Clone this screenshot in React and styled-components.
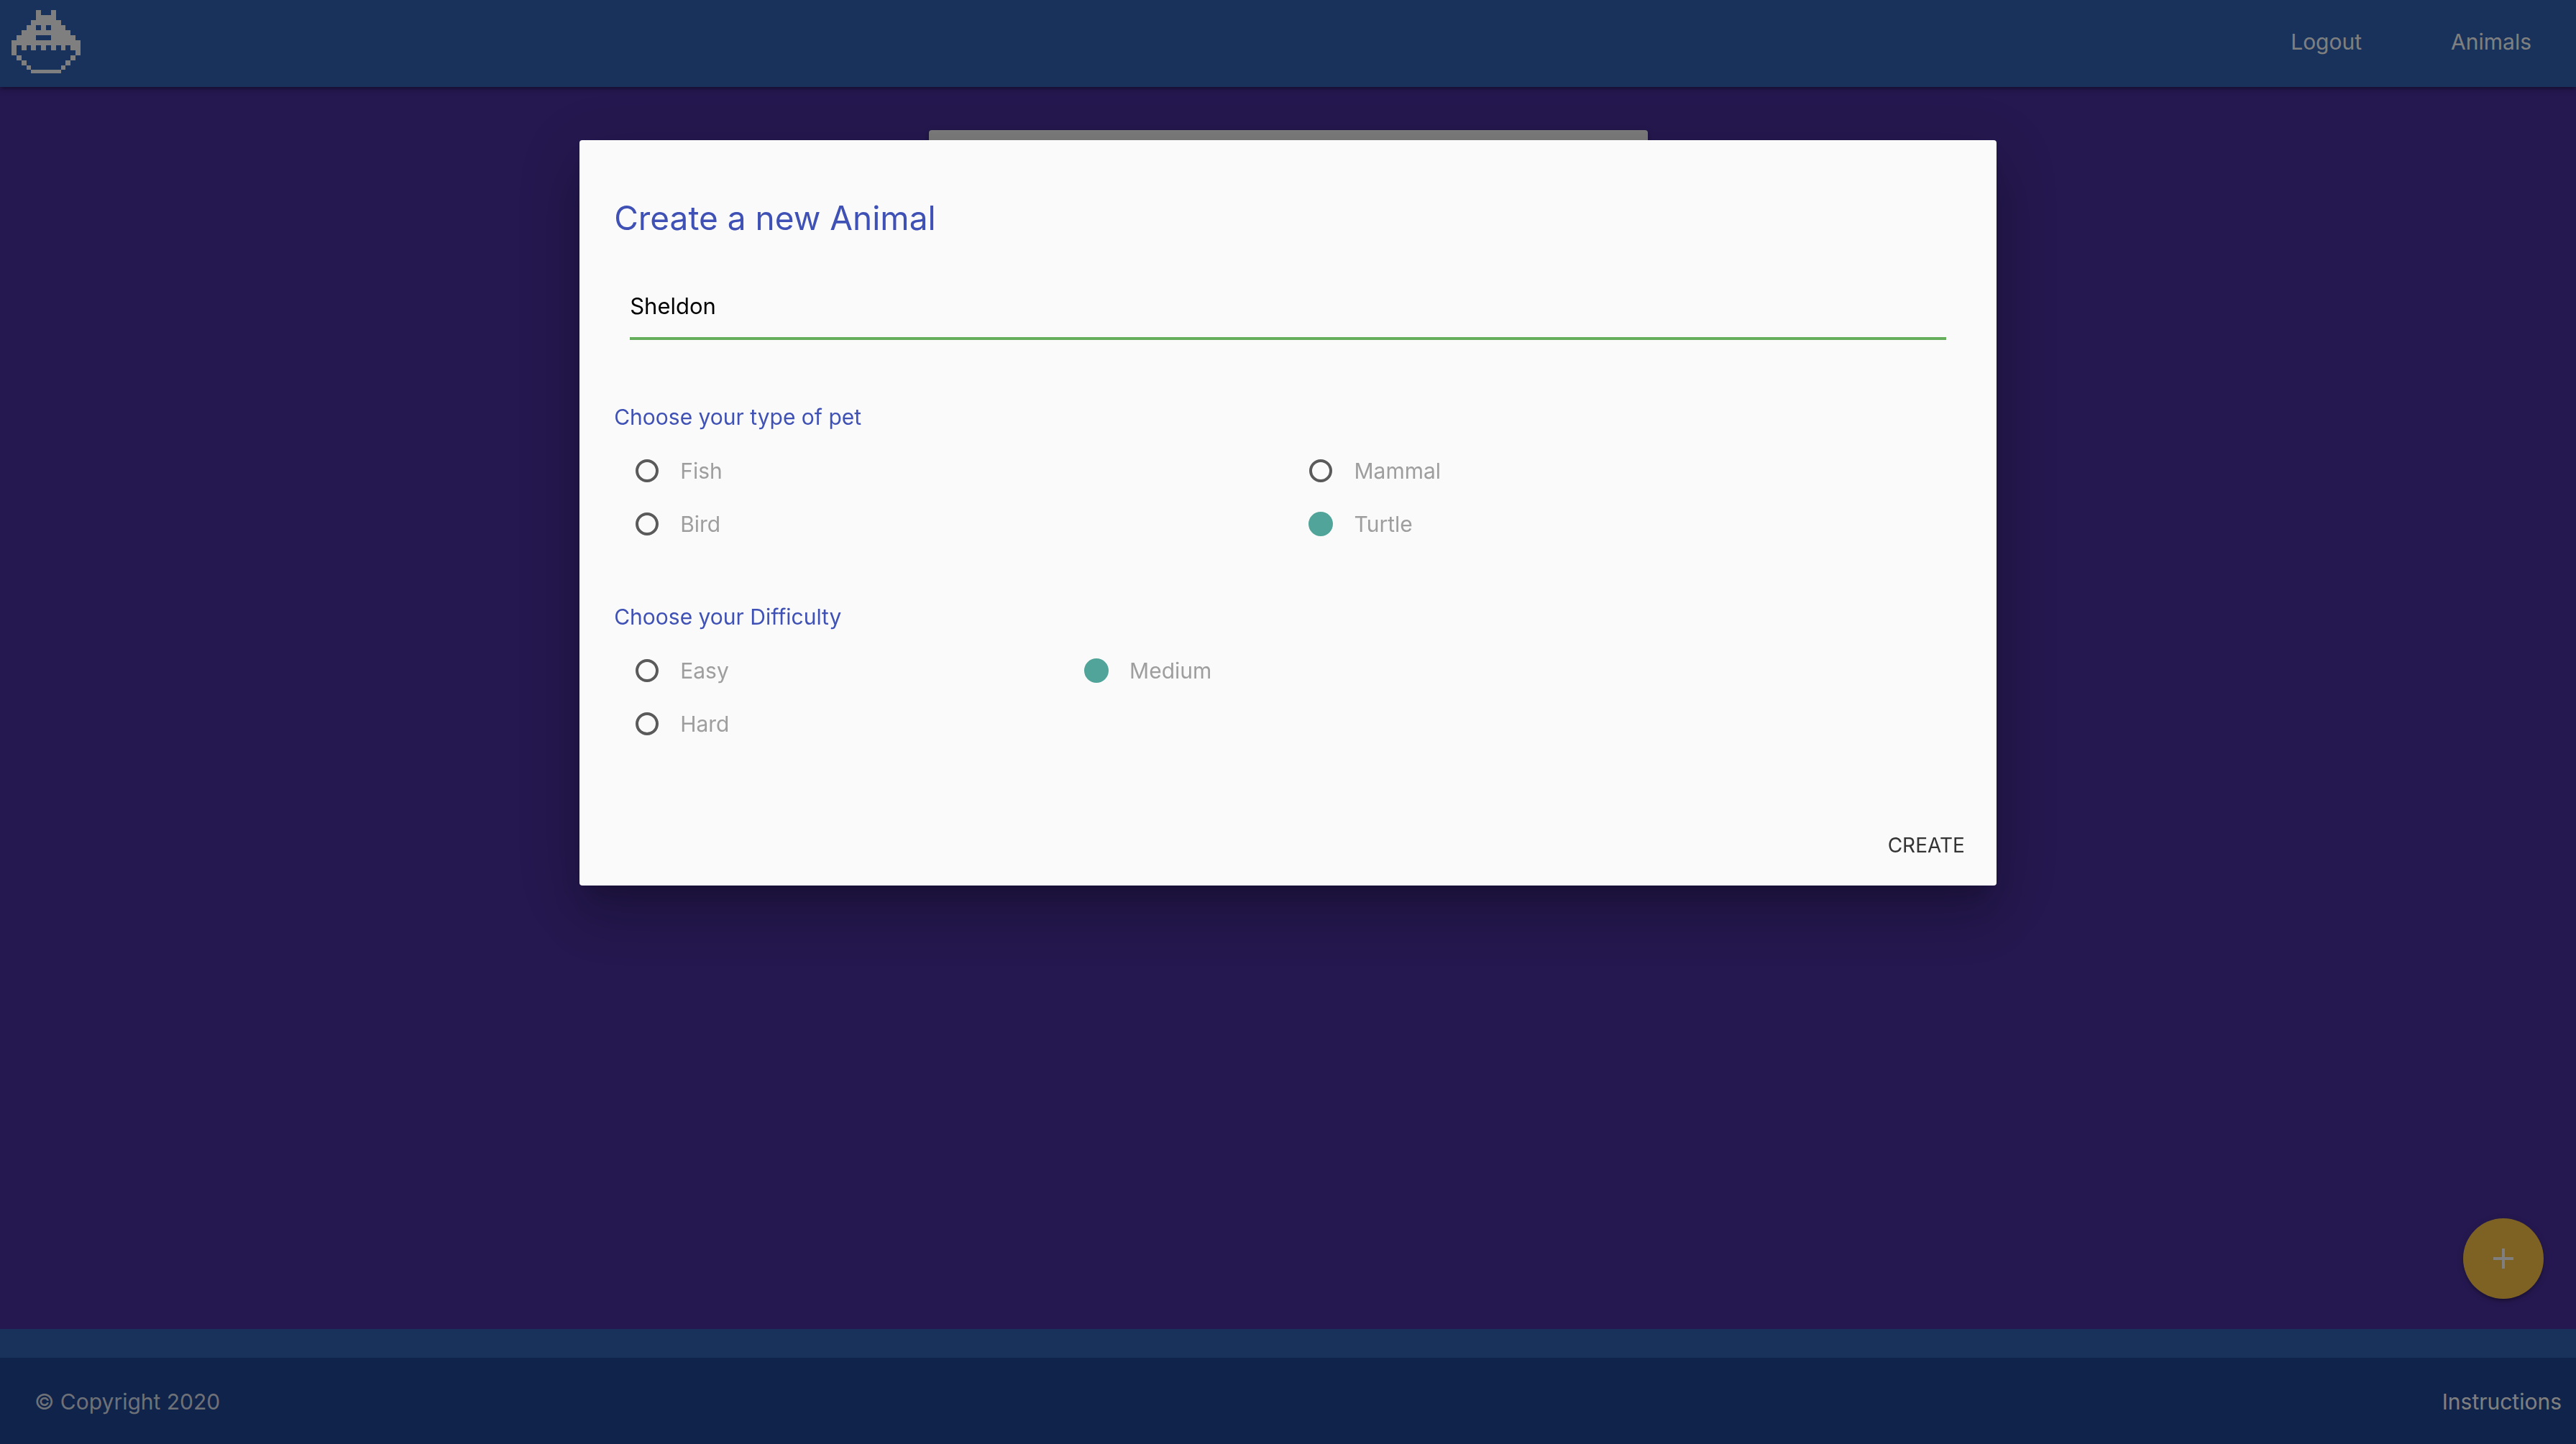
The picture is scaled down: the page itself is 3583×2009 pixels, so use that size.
import React, { useState } from "react";
import styled, { createGlobalStyle } from "styled-components";

const GlobalStyle = createGlobalStyle`
  *, *::before, *::after { box-sizing: border-box; }
  body {
    margin: 0;
    background: #4a30a0;
    font-family: Inter, Roboto, "Liberation Sans", sans-serif;
    font-size: 30px;
    line-height: 44px;
  }
`;

const depth1 =
  "0 4px 4px 0 rgba(0,0,0,.14), 0 6px 2px -4px rgba(0,0,0,.12), 0 2px 10px 0 rgba(0,0,0,.2)";
const depth5 =
  "0 48px 76px 6px rgba(0,0,0,.14), 0 18px 92px 16px rgba(0,0,0,.12), 0 22px 30px -14px rgba(0,0,0,.2)";

const Page = styled.div`
  display: flex;
  flex-direction: column;
  min-height: 100vh;
`;

const Header = styled.header`
  display: flex;
  align-items: center;
  justify-content: space-between;
  min-height: 121px;
  padding: 0 62px 6px 16px;
  background: #3064b8;
  box-shadow: ${depth1};
`;

const HomeLink = styled.a`
  display: block;
  line-height: 0;
`;

const Nav = styled.nav`
  display: flex;
  gap: 124px;
`;

const TextLink = styled.a`
  color: #fff;
  text-decoration: none;
`;

const Main = styled.main`
  flex: 1;
  padding-top: 60px;
`;

const Card = styled.section`
  width: 1000px;
  max-width: 90%;
  height: 640px;
  margin: 0 auto;
  border-radius: 4px;
  background: #fafafa;
  box-shadow: ${depth1};
`;

const Footer = styled.footer`
  padding-top: 40px;
  background: #3064b8;
`;

const FooterBar = styled.div`
  display: flex;
  align-items: center;
  justify-content: space-between;
  min-height: 120px;
  padding: 2px 20px 0 48px;
  background: #1f4696;
`;

const Copyright = styled.span`
  color: rgba(255, 255, 255, 0.85);
`;

const AddButton = styled.button`
  position: fixed;
  right: 45px;
  bottom: 202px;
  display: flex;
  align-items: center;
  justify-content: center;
  width: 112px;
  height: 112px;
  padding: 0;
  border: 0;
  border-radius: 50%;
  background: #fac448;
  box-shadow: ${depth1};
`;

const Overlay = styled.div`
  position: fixed;
  inset: 0;
  display: flex;
  align-items: flex-start;
  justify-content: center;
  padding-top: 195px;
  background: rgba(0, 0, 0, 0.5);
`;

const Modal = styled.form`
  width: 55%;
  border-radius: 4px;
  background: #fafafa;
  box-shadow: ${depth5};
`;

const ModalContent = styled.div`
  padding: 82px 48px 88px;
`;

const Title = styled.h1`
  margin: 0 0 50px;
  color: #3f51b5;
  font-size: 46px;
  font-weight: 400;
  line-height: 52px;
`;

const Field = styled.div`
  padding: 0 22px;
  margin-bottom: 85px;
`;

const NameInput = styled.input`
  display: block;
  width: 100%;
  height: 94px;
  padding: 2px 0 0;
  border: 0;
  border-bottom: 4px solid #66ae5c;
  border-radius: 0;
  outline: 0;
  background: transparent;
  color: #000;
  font: inherit;
  font-size: 31px;
`;

const Group = styled.fieldset`
  min-width: 0;
  margin: 0;
  padding: 0;
  border: 0;

  & + & {
    margin-top: 82px;
  }
`;

const Legend = styled.legend`
  margin-bottom: 28px;
  padding: 0;
  color: #3f51b5;
`;

const Options = styled.div`
  display: grid;
  grid-template-columns: repeat(${(p) => p.$columns}, 1fr);
  row-gap: 24px;
`;

const Option = styled.label`
  display: flex;
  align-items: center;
  gap: 30px;
  height: 50px;
  padding-left: 30px;
  color: #9e9e9e;
  ${(p) => p.$newRow && "grid-column-start: 1;"}
`;

const Radio = styled.input`
  appearance: none;
  width: 32px;
  height: 32px;
  margin: 0;
  border: 4px solid #5a5a5a;
  border-radius: 50%;

  &:checked {
    border-color: #51a499;
    background: #51a499;
    box-shadow: 0 0 0 1px #51a499;
  }
`;

const ModalFooter = styled.div`
  display: flex;
  align-items: center;
  justify-content: flex-end;
  height: 112px;
  padding: 0 12px;
`;

const CreateButton = styled.button`
  height: 72px;
  padding: 0 32px;
  border: 0;
  background: transparent;
  color: #343434;
  font: inherit;
  font-size: 28px;
  text-transform: uppercase;
`;

const logoRows = [
  ".....#..#.....",
  ".....####.....",
  "....######....",
  "...##.#.###...",
  "..##########..",
  ".####...#####.",
  "##############",
  "#.#.#.#.#.#.##",
  "#............#",
  ".#..........#.",
  "..#........#..",
  "...#......#...",
  "....######....",
];

const logoPath = logoRows
  .flatMap((row, y) =>
    [...row.matchAll(/#+/g)].map(
      (run) => `M${run.index} ${y}h${run[0].length}v1h-${run[0].length}z`
    )
  )
  .join("");

function Logo() {
  return (
    <svg
      width="96"
      height="88"
      viewBox="0 0 14 12.65"
      preserveAspectRatio="none"
      shapeRendering="crispEdges"
      aria-hidden="true"
    >
      <path d={logoPath} fill="#fff" />
    </svg>
  );
}

const pets = ["Fish", "Mammal", "Bird", "Turtle"];
const levels = ["Easy", "Medium", "Hard"];

function RadioGroup({ legend, name, options, value, onChange, columns, perRow }) {
  return (
    <Group>
      <Legend>{legend}</Legend>
      <Options $columns={columns}>
        {options.map((option, i) => (
          <Option key={option} $newRow={i % perRow === 0}>
            <Radio
              type="radio"
              name={name}
              value={option}
              checked={value === option}
              onChange={() => onChange(option)}
            />
            {option}
          </Option>
        ))}
      </Options>
    </Group>
  );
}

export default function App() {
  const [name, setName] = useState("Sheldon");
  const [pet, setPet] = useState("Turtle");
  const [level, setLevel] = useState("Medium");

  return (
    <>
      <GlobalStyle />
      <Page>
        <Header>
          <HomeLink href="#home" aria-label="Home">
            <Logo />
          </HomeLink>
          <Nav>
            <TextLink href="#logout">Logout</TextLink>
            <TextLink href="#animals">Animals</TextLink>
          </Nav>
        </Header>
        <Main>
          <Card />
        </Main>
        <Footer>
          <FooterBar>
            <Copyright>© Copyright 2020</Copyright>
            <TextLink href="#instructions">Instructions</TextLink>
          </FooterBar>
        </Footer>
      </Page>
      <AddButton type="button" aria-label="Add animal">
        <svg width="48" height="48" viewBox="0 0 24 24" aria-hidden="true">
          <path d="M19 13h-6v6h-2v-6H5v-2h6V5h2v6h6v2z" fill="#fff" />
        </svg>
      </AddButton>
      <Overlay>
        <Modal
          role="dialog"
          aria-labelledby="create-title"
          onSubmit={(e) => e.preventDefault()}
        >
          <ModalContent>
            <Title id="create-title">Create a new Animal</Title>
            <Field>
              <NameInput
                type="text"
                aria-label="Name"
                value={name}
                onChange={(e) => setName(e.target.value)}
              />
            </Field>
            <RadioGroup
              legend="Choose your type of pet"
              name="pet"
              options={pets}
              value={pet}
              onChange={setPet}
              columns={2}
              perRow={2}
            />
            <RadioGroup
              legend="Choose your Difficulty"
              name="difficulty"
              options={levels}
              value={level}
              onChange={setLevel}
              columns={3}
              perRow={2}
            />
          </ModalContent>
          <ModalFooter>
            <CreateButton type="submit">Create</CreateButton>
          </ModalFooter>
        </Modal>
      </Overlay>
    </>
  );
}
